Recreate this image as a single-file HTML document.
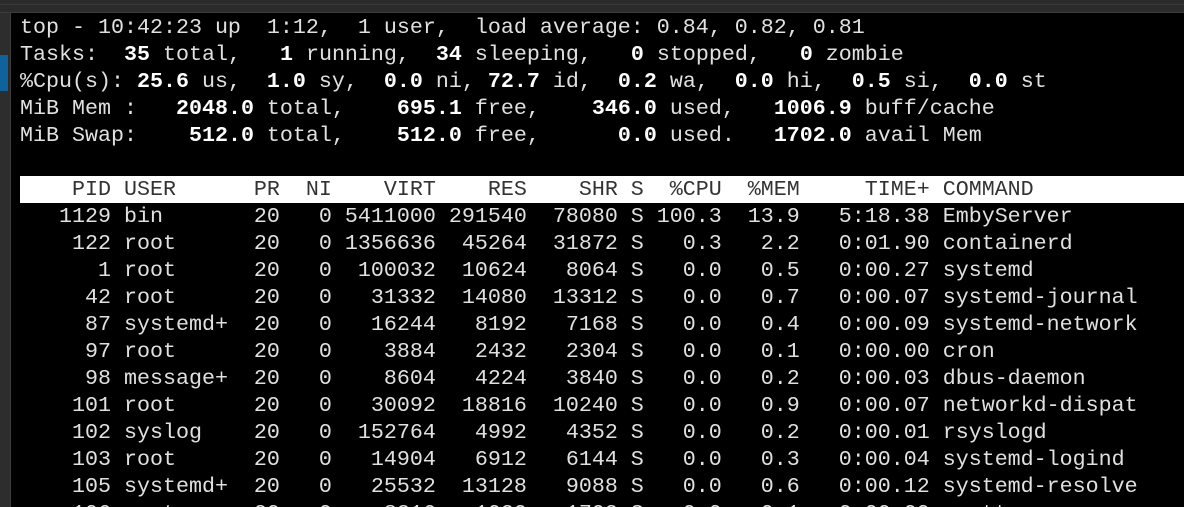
<!DOCTYPE html>
<html><head><meta charset="utf-8"><style>
html,body{margin:0;padding:0;width:1184px;height:507px;overflow:hidden;background:#000;position:relative}
.top{position:absolute;left:0;top:0;width:1184px;height:13px;background:#2b2b2b;border-bottom:1px solid #3c3c3c;box-sizing:border-box}
.top:before{content:"";position:absolute;left:0;top:4px;width:1184px;height:1px;background:#3a3a3a}
.left{position:absolute;left:0;top:13px;width:10px;height:494px;background:#2d2d2d;border-right:1px solid #3f3f3f}
.blue{position:absolute;left:0;top:55px;width:8px;height:36px;background:#0e639c}
.term{position:absolute;left:20px;top:14px;height:493px;overflow:hidden;font-family:"Liberation Mono",monospace;font-size:21.67px;line-height:27px;color:#e0e0e0;white-space:pre}
.term b{color:#fff}
.hdr{background:#fff;color:#333;margin-left:-1px;padding-left:1px;width:1170px;display:block}
</style></head><body>
<div class="top"></div><div class="left"></div><div class="blue"></div>
<div class="term">top - 10:42:23 up  1:12,  1 user,  load average: 0.84, 0.82, 0.81
Tasks: <b> 35</b> total,<b>   1</b> running,<b>  34</b> sleeping,<b>   0</b> stopped,<b>   0</b> zombie
%Cpu(s):<b> 25.6</b> us,<b>  1.0</b> sy,<b>  0.0</b> ni,<b> 72.7</b> id,<b>  0.2</b> wa,<b>  0.0</b> hi,<b>  0.5</b> si,<b>  0.0</b> st
MiB Mem : <b>  2048.0</b> total,<b>    695.1</b> free,<b>    346.0</b> used,<b>   1006.9</b> buff/cache
MiB Swap: <b>   512.0</b> total,<b>    512.0</b> free,<b>      0.0</b> used.<b>   1702.0</b> avail Mem

<span class="hdr">    PID USER      PR  NI    VIRT    RES    SHR S  %CPU  %MEM     TIME+ COMMAND</span>   1129 bin       20   0 5411000 291540  78080 S 100.3  13.9   5:18.38 EmbyServer
    122 root      20   0 1356636  45264  31872 S   0.3   2.2   0:01.90 containerd
      1 root      20   0  100032  10624   8064 S   0.0   0.5   0:00.27 systemd
     42 root      20   0   31332  14080  13312 S   0.0   0.7   0:00.07 systemd-journal
     87 systemd+  20   0   16244   8192   7168 S   0.0   0.4   0:00.09 systemd-network
     97 root      20   0    3884   2432   2304 S   0.0   0.1   0:00.00 cron
     98 message+  20   0    8604   4224   3840 S   0.0   0.2   0:00.03 dbus-daemon
    101 root      20   0   30092  18816  10240 S   0.0   0.9   0:00.07 networkd-dispat
    102 syslog    20   0  152764   4992   4352 S   0.0   0.2   0:00.01 rsyslogd
    103 root      20   0   14904   6912   6144 S   0.0   0.3   0:00.04 systemd-logind
    105 systemd+  20   0   25532  13128   9088 S   0.0   0.6   0:00.12 systemd-resolve
    106 root      20   0    8316   1020   1792 S   0.0   0.1   0:00.00 agetty</div>
</body></html>
